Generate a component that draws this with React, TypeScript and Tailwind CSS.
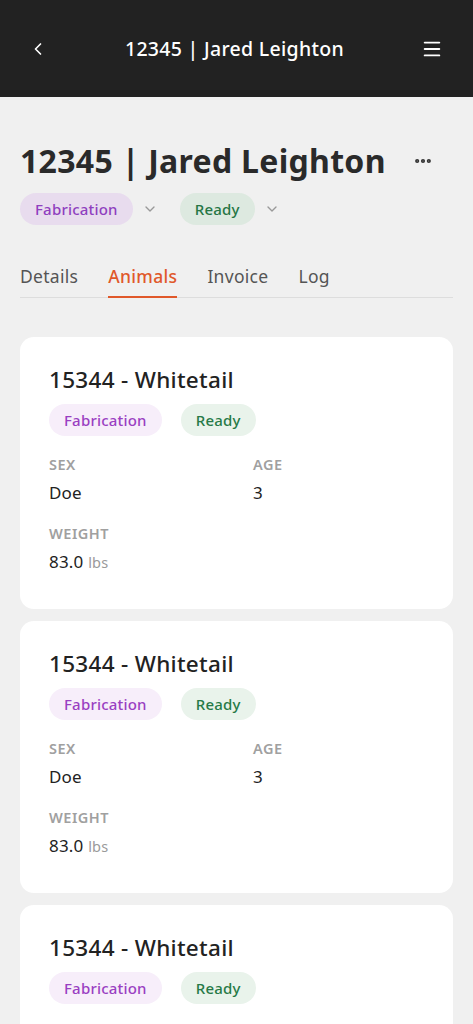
import { ChevronLeft, ChevronDown, Menu, MoreHorizontal } from "lucide-react";

const font = { fontFamily: '"Noto Sans", "Open Sans", sans-serif' };

function Pill({ label, tone, soft }: { label: string; tone: "purple" | "green"; soft?: boolean }) {
  const cls =
    tone === "purple"
      ? soft
        ? "bg-[#f7eefa] text-[#9a3fc2]"
        : "bg-[#e8dcee] text-[#8f3fbf]"
      : soft
        ? "bg-[#e9f3eb] text-[#277a47]"
        : "bg-[#dde9e0] text-[#267645]";
  return (
    <span
      className={`inline-flex h-[32px] items-center rounded-full px-[15px] text-[15px] font-medium tracking-[0.2px] ${cls}`}
    >
      {label}
    </span>
  );
}

function Field({ label, children }: { label: string; children: React.ReactNode }) {
  return (
    <div>
      <div className="text-[14.5px] font-semibold leading-[20px] tracking-[0.5px] text-[#a0a0a0]">{label}</div>
      <div className="mt-[8px] text-[17px] leading-[22px] tracking-[0.2px] text-[#222]">{children}</div>
    </div>
  );
}

function AnimalCard() {
  return (
    <div className="rounded-[14px] bg-white px-[29px] pt-[27px] pb-[36px]">
      <h2 className="text-[22.5px] font-medium leading-[32px] tracking-[0.3px] text-[#222]">15344 - Whitetail</h2>
      <div className="mt-[8px] flex gap-[19px]">
        <Pill label="Fabrication" tone="purple" soft />
        <Pill label="Ready" tone="green" soft />
      </div>
      <div className="mt-[18px] grid grid-cols-[204px_1fr] gap-y-[19px]">
        <Field label="SEX">Doe</Field>
        <Field label="AGE">3</Field>
        <Field label="WEIGHT">
          83.0 <span className="text-[14.5px] text-[#9a9a9a]">lbs</span>
        </Field>
      </div>
    </div>
  );
}

export default function App() {
  const tabs = ["Details", "Animals", "Invoice", "Log"];
  return (
    <div className="min-h-screen bg-[#f0f0f0]" style={font}>
      <header className="flex h-[97px] items-center justify-between bg-[#222222] pl-[28px] pr-[30px] text-white">
        <ChevronLeft size={20} strokeWidth={2} />
        <span className="text-[19.5px] font-medium tracking-[0.3px]">12345 | Jared Leighton</span>
        <Menu size={22} strokeWidth={2} />
      </header>

      <main className="px-[20px]">
        <div className="mt-[44px] flex items-center justify-between pr-[20px]">
          <h1 className="text-[32px] font-bold leading-[40px] tracking-[0.3px] text-[#2a2a2a]">12345 | Jared Leighton</h1>
          <MoreHorizontal size={20} strokeWidth={3} className="text-[#333]" />
        </div>
        <div className="mt-[12px] flex items-center">
          <Pill label="Fabrication" tone="purple" />
          <ChevronDown size={16} className="ml-[9px] mr-[22px] text-[#999]" />
          <Pill label="Ready" tone="green" />
          <ChevronDown size={16} className="ml-[9px] text-[#999]" />
        </div>

        <nav className="mt-[38px] flex border-b border-[#ddd] text-[17.5px] tracking-[0.3px]">
          {tabs.map((t) => (
            <div
              key={t}
              className={`mr-[30px] pb-[7px] ${
                t === "Animals" ? "-mb-px border-b-2 border-[#e0582a] font-medium text-[#e0582a]" : "text-[#555]"
              }`}
            >
              {t}
            </div>
          ))}
        </nav>

        <div className="mt-[39px] flex flex-col gap-[12px] pb-[20px]">
          <AnimalCard />
          <AnimalCard />
          <AnimalCard />
        </div>
      </main>
    </div>
  );
}
